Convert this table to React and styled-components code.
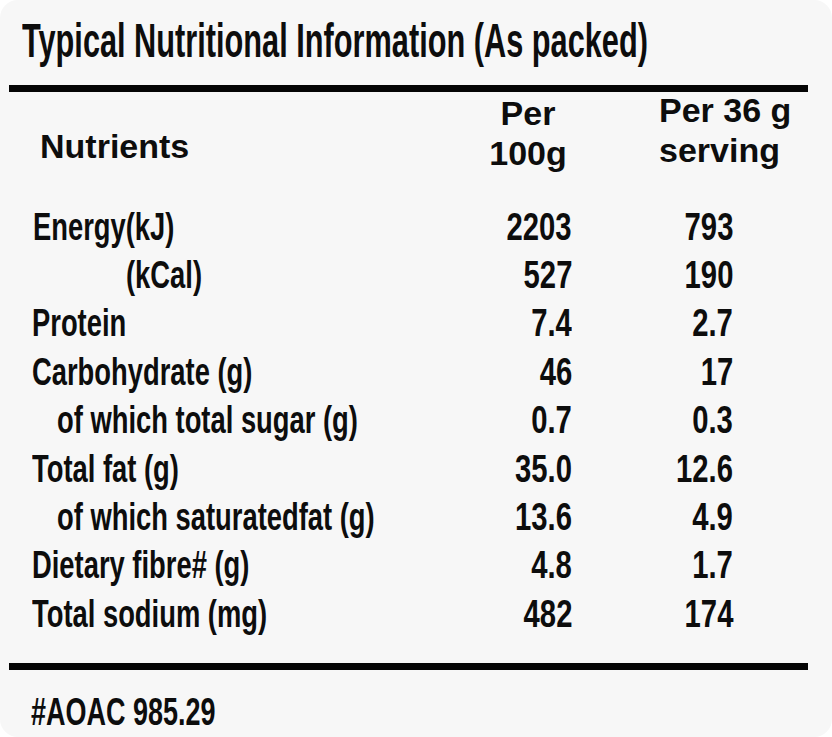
import React from "react";
import styled, { createGlobalStyle } from "styled-components";

const Global = createGlobalStyle`
  html, body { margin: 0; padding: 0; background: #ffffff; }
  #root { width: 832px; height: 737px; }
`;

const Card = styled.div`
  width: 832px;
  height: 737px;
  box-sizing: border-box;
  background: #f7f7f7;
  border-radius: 18px;
  overflow: hidden;
  padding-top: 10px;
  color: #0d0d0d;
  font-family: "Liberation Sans", Arial, sans-serif;
`;

const Squeeze = styled.span`
  display: inline-block;
  white-space: nowrap;
  transform: scaleX(${(p) => p.$sx});
  transform-origin: ${(p) => p.$origin || "left"} center;
`;

const Title = styled.h1`
  margin: 0;
  padding-left: 22px;
  font-size: 49px;
  line-height: 60px;
  font-weight: 700;
`;

const Rule = styled.div`
  height: 7px;
  margin: ${(p) => p.$top}px 24px 0 9px;
  background: #050505;
`;

const Header = styled.div`
  display: grid;
  grid-template-columns: 460px 136px 1fr;
  font-size: 34px;
  font-weight: 700;
  line-height: 40px;
  padding-top: 1px;
  height: 80px;
`;

const HeadLabel = styled.div`
  align-self: end;
  padding-left: 40px;
  margin-bottom: 7px;
`;

const HeadCenter = styled.div`
  display: flex;
  flex-direction: column;
  align-items: center;
`;

const HeadLeft = styled.div`
  display: flex;
  flex-direction: column;
  align-items: flex-start;
  padding-left: 63px;
  margin-top: -3px;
`;

const Table = styled.div`
  display: grid;
  grid-template-columns: 460px 112px 161px minmax(0, 1fr);
  grid-auto-rows: 48.4px;
  margin-top: 29.6px;
  font-size: 38px;
  line-height: 48.4px;
  font-weight: 700;
`;

const Label = styled.div`
  min-width: 0;
  padding-left: ${(p) => p.$indent}px;
`;

const Num = styled.div`
  text-align: right;
`;

const Foot = styled.div`
  margin-top: 18px;
  padding-left: 31px;
  font-size: 38px;
  line-height: 48px;
  font-weight: 700;
`;

const rows = [
  { label: "Energy(kJ)", indent: 33, a: "2203", b: "793" },
  { label: "(kCal)", indent: 126, a: "527", b: "190" },
  { label: "Protein", indent: 32, a: "7.4", b: "2.7" },
  { label: "Carbohydrate (g)", indent: 32, a: "46", b: "17" },
  { label: "of which total sugar (g)", indent: 57, a: "0.7", b: "0.3" },
  { label: "Total fat (g)", indent: 32, a: "35.0", b: "12.6" },
  { label: "of which saturatedfat (g)", indent: 57, a: "13.6", b: "4.9" },
  { label: "Dietary fibre# (g)", indent: 32, a: "4.8", b: "1.7" },
  { label: "Total sodium (mg)", indent: 32, a: "482", b: "174" },
];

export default function App() {
  return (
    <>
      <Global />
      <Card>
        <Title>
          <Squeeze $sx={0.627}>Typical Nutritional Information (As packed)</Squeeze>
        </Title>
        <Rule $top={15} />
        <Header>
          <HeadLabel>Nutrients</HeadLabel>
          <HeadCenter>
            <span>Per</span>
            <span>100g</span>
          </HeadCenter>
          <HeadLeft>
            <span>Per 36 g</span>
            <span>serving</span>
          </HeadLeft>
        </Header>
        <Table>
          {rows.map((r) => (
            <React.Fragment key={r.label}>
              <Label $indent={r.indent}>
                <Squeeze $sx={0.72}>{r.label}</Squeeze>
              </Label>
              <Num>
                <Squeeze $sx={0.77} $origin="right">{r.a}</Squeeze>
              </Num>
              <Num>
                <Squeeze $sx={0.77} $origin="right">{r.b}</Squeeze>
              </Num>
              <span />
            </React.Fragment>
          ))}
        </Table>
        <Rule $top={25} />
        <Foot>
          <Squeeze $sx={0.71}>#AOAC 985.29</Squeeze>
        </Foot>
      </Card>
    </>
  );
}
